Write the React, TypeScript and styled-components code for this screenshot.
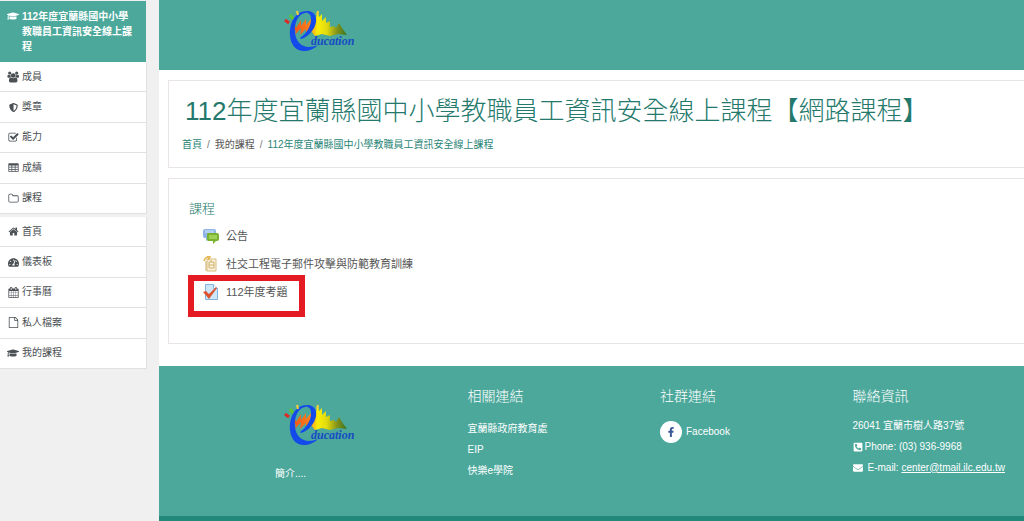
import React from "react";
import styled, { createGlobalStyle, css } from "styled-components";
import {
  FaGraduationCap,
  FaShieldAlt,
  FaTachometerAlt,
  FaPhoneSquareAlt,
  FaEnvelope,
  FaFacebookF,
} from "react-icons/fa";

const teal = "#4ba89b";
const deepTeal = "#21887a";
const linkTeal = "#24796c";

const GlobalStyle = createGlobalStyle`
  * { box-sizing: border-box; }
  body {
    margin: 0;
    background: #fff;
    color: #555;
    font: 10px/16px "Liberation Sans", "Noto Sans CJK TC", sans-serif;
  }
  a { color: inherit; text-decoration: none; }
  h1, h2, h3 { font-weight: 300; }
  h1, h2, h3, p, ul, ol { margin: 0; padding: 0; }
  ul, ol { list-style: none; }
  svg { display: block; flex: none; }
`;

const Page = styled.div`
  display: grid;
  grid-template-columns: 159px minmax(0, 1fr);
  min-height: 100vh;
`;

const Sidebar = styled.aside`
  background: #f0f0f0;
  padding: 1px 12px 0 0;
`;

const NavGroup = styled.ul`
  display: grid;
  grid-auto-rows: 1fr;
  min-height: 152px;
  margin-bottom: 3px;
  background: #fff;
  border-right: 1px solid #e2e2e2;
`;

const NavItem = styled.li`
  display: flex;
  border-bottom: 1px solid #dfe1e3;
`;

const NavLink = styled.a<{ $active?: boolean }>`
  display: grid;
  flex: 1;
  grid-template-columns: 12px 1fr;
  column-gap: 3px;
  align-items: center;
  padding: 0 12px 0 7px;
  color: #4b5054;
  svg { justify-self: center; }
  ${(p) =>
    p.$active &&
    css`
      align-items: start;
      padding: 8px 12px 8px 7px;
      margin-right: 1px;
      line-height: 15px;
      font-weight: 700;
      color: #fff;
      background: ${teal};
      svg { margin-top: 1px; }
    `}
`;

const Main = styled.div`
  display: flex;
  flex-direction: column;
`;

const Banner = styled.header`
  padding: 9px 0 11px 125px;
  background: ${teal};
`;

const Content = styled.main`
  flex: 1;
  display: flex;
  flex-direction: column;
  gap: 10px;
  padding: 10px 0 22px 9px;
`;

const Card = styled.section`
  border: 1px solid #e9e4e5;
  border-right: 0;
`;

const TitleCard = styled(Card)`
  padding: 12px 0 14px 13px;
`;

const Title = styled.h1`
  padding-left: 3px;
  font-size: 26px;
  line-height: 36px;
  color: ${linkTeal};
`;

const Crumbs = styled.ol`
  display: flex;
  padding-top: 8px;
  li + li::before {
    content: "/";
    padding: 0 5px;
    color: #777;
  }
`;

const Crumb = styled.a<{ $plain?: boolean }>`
  color: ${(p) => (p.$plain ? "#555" : "#2b8678")};
`;

const CourseCard = styled(Card)`
  padding: 20px 0 37px 20px;
`;

const SectionTitle = styled.h2`
  font-size: 13px;
  line-height: 20px;
  color: ${linkTeal};
  padding-bottom: 3px;
`;

const Activity = styled.li`
  position: relative;
  display: flex;
  height: 28px;
  padding-left: 14px;
`;

const ActivityLink = styled.a`
  display: flex;
  align-items: center;
  gap: 7px;
  font-size: 11px;
`;

const Highlight = styled.span`
  position: absolute;
  left: -1px;
  top: -3px;
  width: 117px;
  height: 42px;
  border: 6px solid #e41b23;
  pointer-events: none;
`;

const Footer = styled.footer`
  display: grid;
  grid-template-columns: repeat(4, minmax(0, 1fr));
  column-gap: 21px;
  min-height: 155px;
  padding: 19px 0 0 116px;
  color: #fff;
  background: ${teal};
  border-bottom: 5px solid ${deepTeal};
`;

const FooterTitle = styled.h3`
  font-size: 14px;
  line-height: 22px;
  padding-bottom: 8px;
`;

const FooterLinks = styled.ul`
  padding-top: 3px;
`;

const FooterLine = styled.p<{ $gap?: number }>`
  display: flex;
  align-items: center;
  gap: ${(p) => p.$gap ?? 0}px;
  min-height: 21px;
  white-space: nowrap;
`;

const About = styled.div`
  padding-top: 18px;
  svg { margin: 0 0 13px 9px; }
`;

const Mail = styled.a`
  text-decoration: underline;
`;

const Social = styled.a`
  display: inline-flex;
  align-items: center;
  gap: 4px;
  margin-top: 6px;
`;

const Round = styled.span`
  display: grid;
  place-items: center;
  width: 22px;
  height: 22px;
  border-radius: 50%;
  color: #3b5998;
  background: #fff;
`;

const Glyph = ({ d, size = 11, box = 1792 }: { d: string; size?: number; box?: number }) => (
  <svg width={size} height={size} viewBox={`0 0 ${box} 1792`} fill="currentColor" aria-hidden="true">
    <path d={d} />
  </svg>
);

const paths = {
  users:
    "M657 896q-162 5-265 128h-134q-82 0-138-40.500t-56-118.500q0-353 124-353 6 0 43.500 21t97.500 42.500 119 21.500q67 0 133-23-5 37-5 66 0 139 81 256zm1071 637q0 120-73 189.500t-194 69.500h-874q-121 0-194-69.500t-73-189.500q0-53 3.500-103.500t14-109 26.500-108.500 43-97.500 62-81 85.500-53.500 111.500-20q10 0 43 21.500t73 48 107 48 135 21.500 135-21.500 107-48 73-48 43-21.500q61 0 111.500 20t85.500 53.500 62 81 43 97.500 26.500 108.500 14 109 3.500 103.500zm-1024-1277q0 106-75 181t-181 75-181-75-75-181 75-181 181-75 181 75 75 181zm704 384q0 159-112.500 271.500t-271.500 112.500-271.500-112.500-112.500-271.500 112.500-271.500 271.500-112.500 271.500 112.500 112.500 271.500zm576 225q0 78-56 118.500t-138 40.500h-134q-103-123-265-128 81-117 81-256 0-29-5-66 66 23 133 23 59 0 119-21.500t97.500-42.500 43.500-21q124 0 124 353zm-128-609q0 106-75 181t-181 75-181-75-75-181 75-181 181-75 181 75 75 181z",
  check:
    "M1472 930v318q0 119-84.5 203.5t-203.5 84.5h-832q-119 0-203.5-84.5t-84.5-203.5v-832q0-119 84.5-203.5t203.5-84.5h832q63 0 117 25 15 7 18 23 3 17-9 29l-49 49q-10 10-23 10-3 0-9-2-23-6-45-6h-832q-66 0-113 47t-47 113v832q0 66 47 113t113 47h832q66 0 113-47t47-113v-254q0-13 9-22l64-64q10-10 23-10 6 0 12 3 20 8 20 29zm231-489l-814 814q-24 24-57 24t-57-24l-430-430q-24-24-24-57t24-57l110-110q24-24 57-24t57 24l263 263 647-647q24-24 57-24t57 24l110 110q24 24 24 57t-24 57z",
  table:
    "M160 192h1472q100 0 100 100v1208q0 100-100 100h-1472q-100 0-100-100v-1208q0-100 100-100zM188 560v224h380v-224zM696 560v224h400v-224zM1224 560v224h380v-224zM188 910v224h380v-224zM696 910v224h400v-224zM1224 910v224h380v-224zM188 1260v212h380v-212zM696 1260v212h400v-212zM1224 1260v212h380v-212z",
  folder:
    "M1600 1312v-704q0-40-28-68t-68-28h-704q-40 0-68-28t-28-68v-64q0-40-28-68t-68-28h-320q-40 0-68 28t-28 68v960q0 40 28 68t68 28h1216q40 0 68-28t28-68zm128-704v704q0 92-66 158t-158 66h-1216q-92 0-158-66t-66-158v-960q0-92 66-158t158-66h320q92 0 158 66t66 158v32h672q92 0 158 66t66 158z",
  home: "M1472 992v480q0 26-19 45t-45 19h-384v-384h-256v384h-384q-26 0-45-19t-19-45v-480q0-1 .5-3t.5-3l575-474 575 474q1 2 1 6zm223-69l-62 74q-8 9-21 11h-3q-13 0-21-7l-692-577-692 577q-12 8-24 7-13-2-21-11l-62-74q-8-10-7-23.5t11-21.5l719-599q32-26 76-26t76 26l244 204v-195q0-14 9-23t23-9h192q14 0 23 9t9 23v408l219 182q10 8 11 21.5t-7 23.5z",
  calendar:
    "M192 1664h288v-288h-288v288zm352 0h320v-288h-320v288zm-352-352h288v-320h-288v320zm352 0h320v-320h-320v320zm-352-384h288v-288h-288v288zm736 736h320v-288h-320v288zm-384-736h320v-288h-320v288zm768 736h288v-288h-288v288zm-384-352h320v-320h-320v320zm-352-864v-288q0-13-9.5-22.5t-22.5-9.5h-64q-13 0-22.5 9.5t-9.5 22.5v288q0 13 9.5 22.5t22.5 9.5h64q13 0 22.5-9.5t9.5-22.5zm736 864h288v-320h-288v320zm-384-384h320v-288h-320v288zm384 0h288v-288h-288v288zm32-480v-288q0-13-9.5-22.5t-22.5-9.5h-64q-13 0-22.5 9.5t-9.5 22.5v288q0 13 9.5 22.5t22.5 9.5h64q13 0 22.5-9.5t9.5-22.5zm384-64v1280q0 52-38 90t-90 38h-1408q-52 0-90-38t-38-90v-1280q0-52 38-90t90-38h128v-96q0-66 47-113t113-47h64q66 0 113 47t47 113v96h384v-96q0-66 47-113t113-47h64q66 0 113 47t47 113v96h128q52 0 90 38t38 90z",
  file: "M1596 380q28 28 48 76t20 88v1152q0 40-28 68t-68 28h-1344q-40 0-68-28t-28-68v-1600q0-40 28-68t68-28h896q40 0 88 20t76 48zm-444-244v376h376q-10-29-22-41l-313-313q-12-12-41-22zm384 1528v-1024h-416q-40 0-68-28t-28-68v-416h-768v1536h1280z",
};

const Logo = ({ id }: { id: string }) => (
  <svg width="76" height="50" viewBox="0 0 76 50" role="img" aria-label="Education">
    <defs>
      <linearGradient id={id} gradientUnits="userSpaceOnUse" x1="8" x2="64" y1="0" y2="0">
        <stop offset="0" stopColor="#f0501a" />
        <stop offset=".3" stopColor="#fb7d1a" />
        <stop offset=".4" stopColor="#f8c714" />
        <stop offset=".46" stopColor="#fbee08" />
        <stop offset=".62" stopColor="#e0da0f" />
        <stop offset=".8" stopColor="#86941a" />
        <stop offset="1" stopColor="#2f6f22" />
      </linearGradient>
    </defs>
    <path
      fill={`url(#${id})`}
      d="M6 26L11 15 12 19 17 11 17 17 22 10 22 16 27 10 27 16 31 12 34 2 35 8 38 5 38 12 42 8 42 14 46 12 46 18 50 17 52 19 55 14 58 19 63 26 54 25 46 27 38 25 31 27 27 22 22 26 22 20 16 26 17 19 11 26 12 21z"
    />
    {/* Tapered swoosh wrapped around the hills */}
    <path
      fill="#1449ea"
      d="M6 27C5 13 12 2 23 2c10 0 11 10 7 17-3 5-7 9-13 11l-1-1c6-4 11-11 11-19 0-5-3-7-6-6-7 1-11 10-10 20 1 9 7 14 14 14 3 0 6-1 9-2-4 4-9 6-14 6C12 42 7 36 6 27z"
    />
    <path d="M1 11l4 3" stroke="#d92c25" strokeWidth="3" />
    <path d="M6 6l3 4" stroke="#5fc433" strokeWidth="3" />
    <path d="M13 2l1 4M34 2l-1 4" stroke="#f7cf37" strokeWidth="2" />
    <text x="27" y="36" fill="#174bc4" fontFamily="Liberation Serif, serif" fontSize="12" fontStyle="italic" fontWeight="700">
      ducation
    </text>
  </svg>
);

const ForumIcon = () => (
  <svg width="16" height="16" viewBox="0 0 16 16" aria-hidden="true">
    <path d="M2 1h9q2 0 2 2v5q0 2-2 2H6l-3 3v-3H2q-2 0-2-2V3q0-2 2-2z" fill="#8eb4e6" />
    <path d="M2 2h9v3H2z" fill="#b1cdf0" />
    <path d="M5 5h9q2 0 2 2v4q0 2-2 2h-1l-3 3v-3H5q-1 0-1-2V7q0-2 1-2z" fill="#77b32e" />
    <path d="M6 7h8v4H6z" fill="#a0cf58" />
  </svg>
);

const PackageIcon = () => (
  <svg width="16" height="16" viewBox="0 0 16 16" fill="none" aria-hidden="true">
    <path d="M4 3h9v12H4z" fill="#faf3df" stroke="#d8bd7c" />
    <path d="M6 6h5v6H6zM6 9h5M8 4v2M3 5v10" stroke="#cfaf69" />
    <path d="M1 5q1-4 5-4M4 0l3 1-2 3" stroke="#e6b54e" strokeWidth="1.5" />
  </svg>
);

const QuizIcon = () => (
  <svg width="16" height="16" viewBox="0 0 16 16" fill="none" aria-hidden="true">
    <path d="M2.500.5h8l4 4v11h-12z" fill="#cfe5f8" stroke="#82b5e1" />
    <path d="M10.500.5v4h4" fill="#fff" stroke="#82b5e1" />
    <path d="M0 8l3-1 3 3 7-7 1 1-8 11z" fill="#db5531" />
  </svg>
);

const courseNav = [
  { label: "成員", icon: <Glyph d={paths.users} size={12} box={1984} /> },
  { label: "獎章", icon: <FaShieldAlt size={9} /> },
  { label: "能力", icon: <Glyph d={paths.check} /> },
  { label: "成績", icon: <Glyph d={paths.table} /> },
  { label: "課程", icon: <Glyph d={paths.folder} /> },
];

const siteNav = [
  { label: "首頁", icon: <Glyph d={paths.home} /> },
  { label: "儀表板", icon: <FaTachometerAlt size={11} /> },
  { label: "行事曆", icon: <Glyph d={paths.calendar} /> },
  { label: "私人檔案", icon: <Glyph d={paths.file} /> },
  { label: "我的課程", icon: <FaGraduationCap size={12} /> },
];

const activities = [
  { label: "公告", icon: <ForumIcon /> },
  { label: "社交工程電子郵件攻擊與防範教育訓練", icon: <PackageIcon /> },
  { label: "112年度考題", icon: <QuizIcon />, marked: true },
];

const NavList = ({ items }: { items: typeof courseNav }) => (
  <NavGroup>
    {items.map((item) => (
      <NavItem key={item.label}>
        <NavLink href="#">
          {item.icon}
          <span>{item.label}</span>
        </NavLink>
      </NavItem>
    ))}
  </NavGroup>
);

export default function App() {
  return (
    <Page>
      <GlobalStyle />
      <Sidebar>
        <nav>
          <NavLink href="#" $active>
            <FaGraduationCap size={12} />
            <span>112年度宜蘭縣國中小學教職員工資訊安全線上課程</span>
          </NavLink>
          <NavList items={courseNav} />
          <NavList items={siteNav} />
        </nav>
      </Sidebar>
      <Main>
        <Banner>
          <Logo id="header-hills" />
        </Banner>
        <Content>
          <TitleCard>
            <Title>112年度宜蘭縣國中小學教職員工資訊安全線上課程【網路課程】</Title>
            <nav aria-label="breadcrumb">
              <Crumbs>
                <li><Crumb href="#">首頁</Crumb></li>
                <li><Crumb href="#" $plain>我的課程</Crumb></li>
                <li><Crumb href="#">112年度宜蘭縣國中小學教職員工資訊安全線上課程</Crumb></li>
              </Crumbs>
            </nav>
          </TitleCard>
          <CourseCard>
            <SectionTitle>課程</SectionTitle>
            <ul>
              {activities.map((a) => (
                <Activity key={a.label}>
                  <ActivityLink href="#">
                    {a.icon}
                    <span>{a.label}</span>
                  </ActivityLink>
                  {a.marked && <Highlight />}
                </Activity>
              ))}
            </ul>
          </CourseCard>
        </Content>
        <Footer>
          <About>
            <Logo id="footer-hills" />
            <p>簡介....</p>
          </About>
          <div>
            <FooterTitle>相關連結</FooterTitle>
            <FooterLinks>
              <FooterLine as="li"><a href="#">宜蘭縣政府教育處</a></FooterLine>
              <FooterLine as="li"><a href="#">EIP</a></FooterLine>
              <FooterLine as="li"><a href="#">快樂e學院</a></FooterLine>
            </FooterLinks>
          </div>
          <div>
            <FooterTitle>社群連結</FooterTitle>
            <Social href="#">
              <Round><FaFacebookF size={10} /></Round>
              Facebook
            </Social>
          </div>
          <div>
            <FooterTitle>聯絡資訊</FooterTitle>
            <FooterLine>26041 宜蘭市樹人路37號</FooterLine>
            <FooterLine $gap={2}><FaPhoneSquareAlt size={10} />Phone: (03) 936-9968</FooterLine>
            <FooterLine $gap={5}>
              <FaEnvelope size={10} />
              <span>E-mail: <Mail href="mailto:center@tmail.ilc.edu.tw">center@tmail.ilc.edu.tw</Mail></span>
            </FooterLine>
          </div>
        </Footer>
      </Main>
    </Page>
  );
}
